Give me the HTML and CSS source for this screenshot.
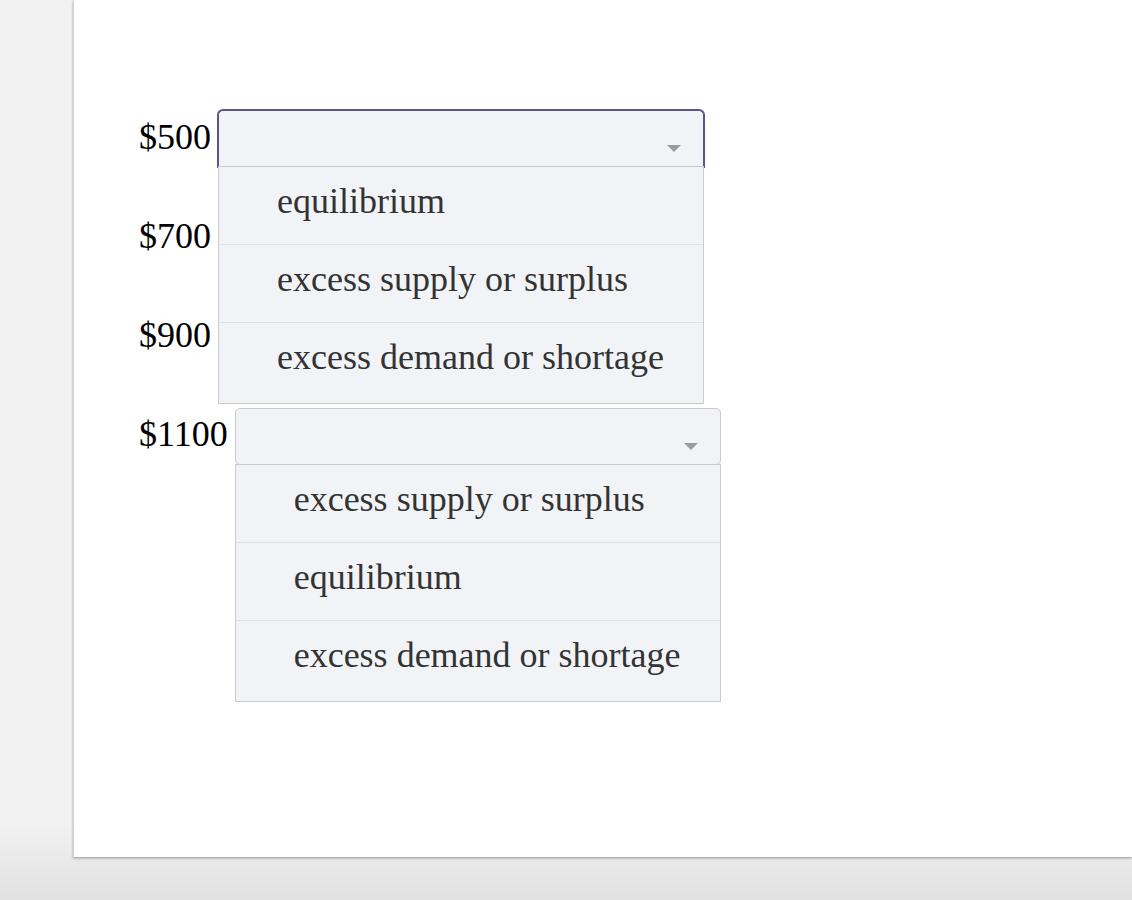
FILE: index.html
```html
<!DOCTYPE html>
<html lang="en">
<head>
<meta charset="utf-8">
<title>Price dropdowns</title>
<link rel="stylesheet" href="styles.css">
</head>
<body>
<div class="panel">
  <div class="rows">
    <div class="row">
      <span class="label">$500</span>
      <div class="combo open">
        <div class="select focused"><span class="arrow"></span></div>
        <ul class="menu">
          <li>equilibrium</li>
          <li>excess supply or surplus</li>
          <li>excess demand or shortage</li>
        </ul>
      </div>
    </div>
    <div class="row">
      <span class="label">$700</span>
      <div class="combo">
        <div class="select"><span class="arrow"></span></div>
      </div>
    </div>
    <div class="row">
      <span class="label">$900</span>
      <div class="combo">
        <div class="select"><span class="arrow"></span></div>
      </div>
    </div>
    <div class="row">
      <span class="label">$1100</span>
      <div class="combo open">
        <div class="select"><span class="arrow"></span></div>
        <ul class="menu">
          <li>excess supply or surplus</li>
          <li>equilibrium</li>
          <li>excess demand or shortage</li>
        </ul>
      </div>
    </div>
  </div>
</div>
</body>
</html>
```
FILE: styles.css
```css
html, body {
  margin: 0;
  padding: 0;
}
body {
  width: 1132px;
  height: 900px;
  overflow: hidden;
  background: linear-gradient(to bottom, #f2f2f2 0, #f2f2f2 820px, #e1e1e1 900px);
  font-family: "Liberation Serif", "Times New Roman", serif;
}
.panel {
  margin-left: 73px;
  height: 857px;
  background: #ffffff;
  border-left: 1px solid #d6d6d6;
  box-shadow: 0 1px 2px rgba(0, 0, 0, 0.28), 0 2px 4px rgba(0, 0, 0, 0.08);
  padding: 110px 0 0 65px;
  box-sizing: border-box;
}
.rows {
  display: flex;
  flex-direction: column;
  gap: 42.3px;
}
.row {
  display: flex;
  align-items: center;
  gap: 7px;
  height: 57px;
}
.label {
  font-size: 36px;
  color: #000;
  line-height: 1;
  margin-top: -4px;
}
.combo {
  position: relative;
  width: 486px;
  height: 57px;
}
.combo.open {
  z-index: 2;
}
.select {
  box-sizing: border-box;
  width: 100%;
  height: 57px;
  border: 1px solid #cacaca;
  border-radius: 5px;
  background: #f2f3f7;
  position: relative;
}
.select.focused {
  border-color: #59538e;
  box-shadow: 0 0 0 1px #59538e;
  border-radius: 5px 5px 0 0;
}
.arrow {
  position: absolute;
  right: 22px;
  top: 34px;
  width: 0;
  height: 0;
  border-left: 7px solid transparent;
  border-right: 7px solid transparent;
  border-top: 7px solid #9b9b9b;
}
.menu {
  position: absolute;
  left: 0;
  right: 0;
  top: 56px;
  margin: 0;
  padding: 0 0 3px;
  list-style: none;
  background: #f2f3f7;
  border: 1px solid #cbcbcb;
  z-index: 3;
}
.menu li {
  height: 78px;
  box-sizing: border-box;
  display: flex;
  align-items: center;
  padding: 0 0 9px 58px;
  font-size: 36px;
  color: #333333;
  border-top: 1px solid #e0e1e5;
}
.menu li:first-child {
  border-top: none;
  height: 77px;
}
```
